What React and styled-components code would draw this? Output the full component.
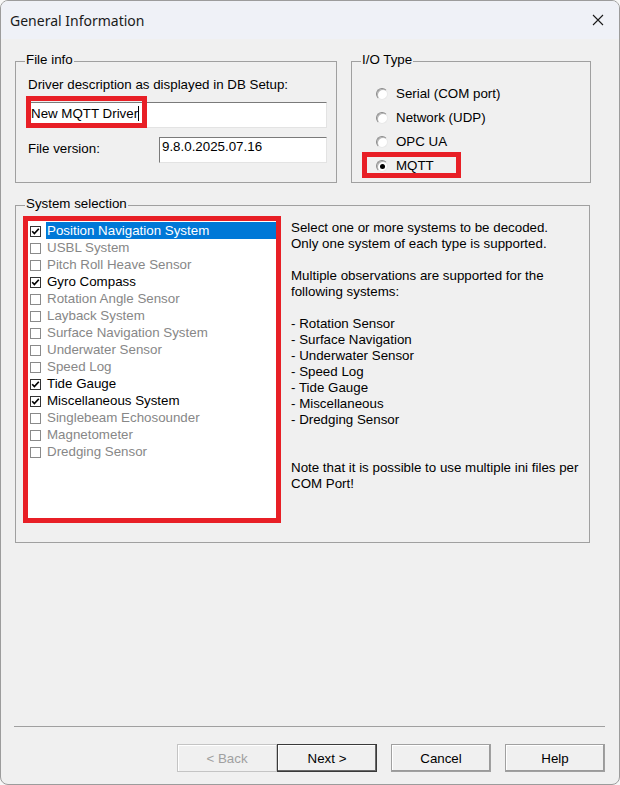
import styled, { createGlobalStyle } from "styled-components"

const GlobalStyle = createGlobalStyle`
  html, body { margin: 0; padding: 0; background: #f7f7f7; }
  body {
    font-family: "Liberation Sans", Arial, sans-serif;
    font-size: 13.33px;
    color: #000;
  }
  * { box-sizing: border-box; }
`

const RED = "#e81f26"

const Window = styled.div`
  width: 620px;
  height: 785px;
  border: 1px solid #9c9c9c;
  border-radius: 8px;
  overflow: hidden;
  background: #f0f0f0;
  display: flex;
  flex-direction: column;
`
const TitleBar = styled.div`
  height: 38px;
  flex: none;
  background: #eff1f7;
  display: flex;
  align-items: center;
  justify-content: space-between;
  padding: 0 15px 0 9px;
  font-family: "Noto Sans", "Segoe UI", sans-serif;
  font-size: 14px;
  color: #1a1a1a;
`
const Content = styled.div`
  flex: 1;
  display: flex;
  flex-direction: column;
  padding: 22px 14px 12px 14px;
`
const TopRow = styled.div`
  display: grid;
  grid-template-columns: 322px 240px;
  column-gap: 14px;
`
const GroupBox = styled.div`
  position: relative;
  border: 1px solid #a0a0a0;
  height: ${(p) => p.$h}px;
  width: ${(p) => (p.$w ? `${p.$w}px` : "auto")};
  padding: ${(p) => p.$pad};
  line-height: 16px;
`
const Legend = styled.span`
  position: absolute;
  top: -10px;
  left: 9px;
  padding: 0 1px;
  background: #f0f0f0;
  line-height: 16px;
`
const Label = styled.div`
  padding-left: 2px;
  margin-top: ${(p) => p.$mt || 0}px;
`
const TextBox = styled.div`
  position: relative;
  height: 26px;
  width: ${(p) => (p.$w ? `${p.$w}px` : "100%")};
  margin-top: ${(p) => p.$mt || 0}px;
  background: #fff;
  border: 1px solid;
  border-color: #7a7a7a #e3e3e3 #e3e3e3 #7a7a7a;
  padding: ${(p) => p.$pad};
  white-space: nowrap;
`
const Caret = styled.span`
  display: inline-block;
  width: 1px;
  height: 15px;
  background: #000;
  vertical-align: -3px;
`
const Highlight = styled.div`
  position: absolute;
  border: 5px solid ${RED};
  pointer-events: none;
`
const FieldRow = styled.div`
  display: flex;
  justify-content: space-between;
  align-items: flex-start;
  margin-top: 9px;
`
const RadioRow = styled.div`
  position: relative;
  height: 24px;
  display: flex;
  align-items: center;
  gap: 8px;
`
const RadioCircle = styled.span`
  width: 12px;
  height: 12px;
  border-radius: 50%;
  background: #fff;
  border: 1px solid;
  border-color: #8a8a8a #e8e8e8 #e8e8e8 #8a8a8a;
  box-shadow: inset 1px 1px 0 #b4b4b4;
  display: flex;
  align-items: center;
  justify-content: center;
  &::after {
    content: "";
    width: 5px;
    height: 5px;
    border-radius: 50%;
    background: ${(p) => (p.$on ? "#000" : "transparent")};
  }
`
const SystemGroup = styled(GroupBox)`
  margin-top: 22px;
  display: flex;
  align-items: flex-start;
  gap: 10px;
`
const ListBox = styled.div`
  width: 258px;
  height: 307px;
  border: 5px solid ${RED};
  background: #fff;
  padding: 1px 0 0 2px;
`
const ListItem = styled.div`
  height: 17px;
  display: flex;
  align-items: flex-start;
`
const CheckBox = styled.span`
  flex: none;
  width: 11px;
  height: 11px;
  margin-top: 4px;
  border: 1px solid ${(p) => (p.$on ? "#333" : "#8a8a8a")};
  background: #fff;
  display: flex;
  align-items: center;
  justify-content: center;
`
const ItemText = styled.span`
  margin-left: 5px;
  padding: 1px;
  line-height: 15px;
  flex: ${(p) => (p.$sel ? 1 : "none")};
  background: ${(p) => (p.$sel ? "#0078d7" : "transparent")};
  color: ${(p) => (p.$sel ? "#fff" : p.$on ? "#000" : "#878787")};
`
const HelpText = styled.div`
  margin-top: 4px;
  line-height: 16px;
`
const HelpLine = styled.div`
  min-height: 16px;
  white-space: pre;
`
const Spacer = styled.div`
  flex: 1;
`
const Separator = styled.div`
  height: 1px;
  background: #a0a0a0;
  margin: 0 0 17px -1px;
`
const ButtonRow = styled.div`
  display: flex;
  justify-content: flex-end;
`
const Button = styled.button`
  width: 100px;
  height: 28px;
  margin-left: ${(p) => p.$ml || 0}px;
  font-family: inherit;
  font-size: 13.33px;
  background: #f0f0f0;
  color: ${(p) => (p.disabled ? "#a0a0a0" : "#000")};
  border: 1px solid ${(p) => (p.$default ? "#3a3a3a" : p.disabled ? "#c4c4c4" : "#a0a0a0")};
  box-shadow: ${(p) =>
    p.disabled
      ? "inset 1px 1px 0 #fff"
      : p.$default
      ? "inset -1px -1px 0 #696969, inset 1px 1px 0 #fff"
      : "inset -1px -1px 0 #9a9a9a, inset 1px 1px 0 #fff"};
  padding: 0;
`

const systems = [
  { name: "Position Navigation System", on: true, sel: true },
  { name: "USBL System" },
  { name: "Pitch Roll Heave Sensor" },
  { name: "Gyro Compass", on: true },
  { name: "Rotation Angle Sensor" },
  { name: "Layback System" },
  { name: "Surface Navigation System" },
  { name: "Underwater Sensor" },
  { name: "Speed Log" },
  { name: "Tide Gauge", on: true },
  { name: "Miscellaneous System", on: true },
  { name: "Singlebeam Echosounder" },
  { name: "Magnetometer" },
  { name: "Dredging Sensor" },
]

const help = [
  "Select one or more systems to be decoded.",
  "Only one system of each type is supported.",
  "",
  "Multiple observations are supported for the",
  "following systems:",
  "",
  "- Rotation Sensor",
  "- Surface Navigation",
  "- Underwater Sensor",
  "- Speed Log",
  "- Tide Gauge",
  "- Miscellaneous",
  "- Dredging Sensor",
  "",
  "",
  "Note that it is possible to use multiple ini files per",
  "COM Port!",
]

const ioTypes = ["Serial (COM port)", "Network (UDP)", "OPC UA", "MQTT"]

function CloseIcon() {
  return (
    <svg width="12" height="12" viewBox="0 0 12 12">
      <path d="M1 1 L11 11 M11 1 L1 11" stroke="#1a1a1a" strokeWidth="1.1" fill="none" />
    </svg>
  )
}

function Tick() {
  return (
    <svg width="9" height="9" viewBox="0 0 9 9">
      <path d="M1.2 4.2 L3.4 6.6 L7.8 1.8" stroke="#000" strokeWidth="1.7" fill="none" />
    </svg>
  )
}

function App() {
  return (
    <>
      <GlobalStyle />
      <Window>
        <TitleBar>
          <span>General Information</span>
          <CloseIcon />
        </TitleBar>
        <Content>
          <TopRow>
            <GroupBox $h={122} $pad="0 9px 0 10px">
              <Legend>File info</Legend>
              <Label $mt={15}>Driver description as displayed in DB Setup:</Label>
              <TextBox $mt={9} $pad="3px 0 0 4px">
                New MQTT Driver<Caret />
                <Highlight style={{ left: -1, top: -7, width: 121, height: 32 }} />
              </TextBox>
              <FieldRow>
                <Label $mt={4}>File version:</Label>
                <TextBox $w={168} $pad="1px 0 0 2px">9.8.0.2025.07.16</TextBox>
              </FieldRow>
            </GroupBox>
            <GroupBox $h={122} $pad="20px 0 0 24px">
              <Legend>I/O Type</Legend>
              {ioTypes.map((t, i) => (
                <RadioRow key={t}>
                  <RadioCircle $on={i === 3} />
                  <span>{t}</span>
                  {i === 3 && <Highlight style={{ left: -14, top: -2, width: 99, height: 26 }} />}
                </RadioRow>
              ))}
            </GroupBox>
          </TopRow>
          <SystemGroup $h={338} $w={575} $pad="10px 0 0 7px">
            <Legend>System selection</Legend>
            <ListBox>
              {systems.map((s) => (
                <ListItem key={s.name}>
                  <CheckBox $on={s.on}>{s.on && <Tick />}</CheckBox>
                  <ItemText $on={s.on} $sel={s.sel}>{s.name}</ItemText>
                </ListItem>
              ))}
            </ListBox>
            <HelpText>
              {help.map((l, i) => (
                <HelpLine key={i}>{l}</HelpLine>
              ))}
            </HelpText>
          </SystemGroup>
          <Spacer />
          <Separator />
          <ButtonRow>
            <Button disabled>&lt; Back</Button>
            <Button $default>Next &gt;</Button>
            <Button $ml={14}>Cancel</Button>
            <Button $ml={14}>Help</Button>
          </ButtonRow>
        </Content>
      </Window>
    </>
  )
}

export default App
